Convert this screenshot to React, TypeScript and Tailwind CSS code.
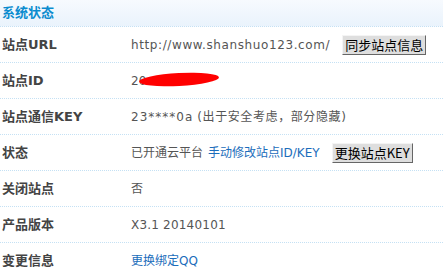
const label = "font-['DejaVu_Sans','Noto_Sans_CJK_SC',sans-serif]";

const Btn = ({ children }: { children: React.ReactNode }) => (
  <button className="ml-[12px] h-[20px] px-[2px] bg-[#dedede] border border-t-[#f4f4f4] border-l-[#f4f4f4] border-r-[#666] border-b-[#666] text-[13px] leading-[17px] text-black font-['Noto_Sans_CJK_SC',sans-serif]">
    {children}
  </button>
);

const Row = ({ name, children }: { name: React.ReactNode; children: React.ReactNode }) => (
  <div className="flex items-center h-[36px] border-b border-dotted border-[#c5e1f4]">
    <div className={`w-[131px] pl-[2px] font-bold text-[13px] text-[#444] ${label}`}>{name}</div>
    <div className={`flex items-center text-[12px] text-[#555] ${label}`}>{children}</div>
  </div>
);

export default function App() {
  return (
    <div className="w-[443px] h-[277px] overflow-hidden bg-white">
      <div className="h-[27px] bg-gradient-to-b from-[#f7fafe] to-[#eaf3fc] border-b border-dotted border-[#c5e1f4] flex items-center">
        <span className={`pl-[2px] font-bold text-[13px] text-[#0b8ccf] ${label}`}>系统状态</span>
      </div>
      <Row name="站点URL">
        <span className="tracking-[0.6px]">http://www.shanshuo123.com/</span>
        <Btn>同步站点信息</Btn>
      </Row>
      <Row name="站点ID">
        <span className="relative">
          20
          <span className="absolute left-[8px] top-[1px] w-[80px] h-[13px] bg-[#ff0000] rounded-[50%] rotate-[-3deg]" />
        </span>
      </Row>
      <Row name="站点通信KEY">
        <span className="tracking-[1px]">23****0a</span>
        <span className="ml-[4px] tracking-[0.6px]">(出于安全考虑，部分隐藏)</span>
      </Row>
      <Row name="状态">
        <span>已开通云平台</span>
        <span className="ml-[5px] text-[#1b6dbb]">手动修改站点ID/KEY</span>
        <Btn>更换站点KEY</Btn>
      </Row>
      <Row name="关闭站点">
        <span>否</span>
      </Row>
      <Row name="产品版本">
        <span className="tracking-[0.2px]">X3.1 20140101</span>
      </Row>
      <Row name="变更信息">
        <span className="text-[#1b6dbb]">更换绑定QQ</span>
      </Row>
    </div>
  );
}
